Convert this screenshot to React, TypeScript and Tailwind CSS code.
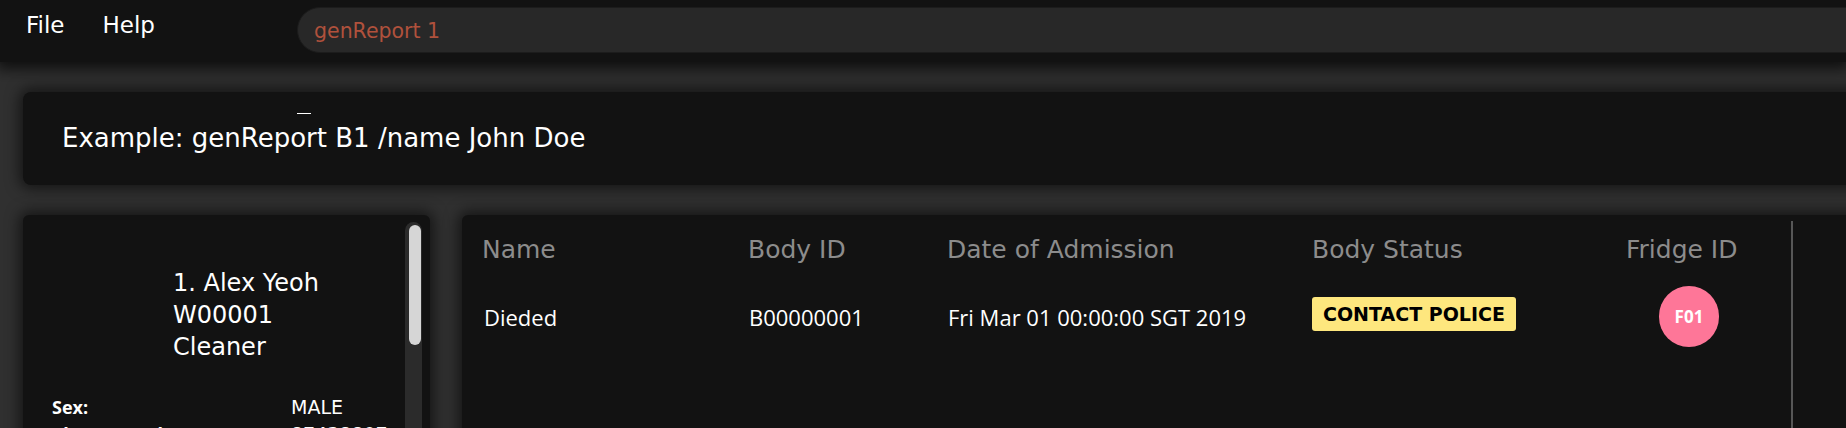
const gothic = "font-['DejaVu_Sans',sans-serif]";
const segoe = "font-['Open_Sans',sans-serif]";

function MenuBar() {
  return (
    <div className="relative z-20 flex h-[62px] shrink-0 bg-[#121212] shadow-[0_3px_14px_4px_rgba(0,0,0,0.7)]">
      <div className={`flex w-[297px] shrink-0 gap-[38px] pl-[26px] pt-[12px] text-[23px] leading-[27px] text-white ${gothic}`}>
        <span>File</span>
        <span>Help</span>
      </div>
      <div className="mr-[-40px] mt-[7px] h-[46px] flex-1 rounded-full border border-[#1c1c1c] bg-[#282828] pl-[16px] pt-[11px]">
        <span className={`block text-[20.5px] leading-[24px] text-[#b0513c] ${gothic}`}>genReport 1</span>
      </div>
    </div>
  );
}

function ResultBox() {
  return (
    <div className="ml-[23px] mr-[-40px] mt-[30px] h-[93px] shrink-0 rounded-lg bg-[#121212] pl-[39px] pt-[21px] shadow-[0_0_14px_4px_rgba(0,0,0,0.55)]">
      <div className="ml-[235px] h-[1px] w-[14px] bg-white" />
      <p className={`mt-[9px] text-[26px] leading-[30px] text-white ${gothic}`}>Example: genReport B1 /name John Doe</p>
    </div>
  );
}

function WorkerCard() {
  return (
    <div className="flex h-full w-[407px] shrink-0 rounded-md bg-[#121212] shadow-[0_0_14px_4px_rgba(0,0,0,0.55)]">
      <div className="flex-1 pt-[52px]">
        <div className={`pl-[150px] text-[24px] leading-[32px] text-white ${gothic}`}>
          <div>1. Alex Yeoh</div>
          <div>W00001</div>
          <div>Cleaner</div>
        </div>
        <div className="mt-[32px] grid grid-cols-[268px_1fr] gap-y-[3px] leading-[24px] text-white">
          <span className={`pl-[29px] text-[18px] font-bold ${segoe}`}>Sex:</span>
          <span className={`text-[19px] ${gothic}`}>MALE</span>
          <span className={`pl-[29px] text-[18px] font-bold ${segoe}`}>Phone Number:</span>
          <span className={`text-[19px] ${gothic}`}>87438807</span>
        </div>
      </div>
      <div className="mr-[8px] mt-[7px] w-[17px] rounded-t-full bg-[#2b2b2b] px-[4px] pt-[3px]">
        <div className="h-[120px] w-[12px] rounded-full bg-[#d6d6d6]" />
      </div>
    </div>
  );
}

function BodyTable() {
  const headers = ["Name", "Body ID", "Date of Admission", "Body Status", "Fridge ID"];
  const cols = "grid grid-cols-[266px_199px_365px_314px_150px]";
  return (
    <div className="ml-[32px] mr-[-40px] flex h-full flex-1 rounded-md bg-[#121212] shadow-[0_0_14px_4px_rgba(0,0,0,0.55)]">
      <div className="w-[1329px] shrink-0 pl-[20px] pt-[20px]">
        <div className={`${cols} text-[25px] leading-[30px] text-[#8c8c8c] ${gothic}`}>
          {headers.map((h) => (
            <span key={h}>{h}</span>
          ))}
        </div>
        <div className={`${cols} mt-[21px] h-[61px] items-center text-white`}>
          <span className={`pl-[2px] text-[22px] leading-[30px] ${segoe}`}>Dieded</span>
          <span className={`pl-[1px] text-[22px] leading-[30px] ${segoe}`}>B00000001</span>
          <span className={`pl-[1px] text-[22px] leading-[30px] ${segoe}`}>Fri Mar 01 00:00:00 SGT 2019</span>
          <div className="-mt-[5px] flex">
            <span className={`rounded-[3px] bg-[#fee77e] px-[11px] py-[6px] text-[19px] font-bold leading-[22px] text-black ${gothic}`}>
              CONTACT POLICE
            </span>
          </div>
          <div className="flex pl-[33px]">
            <div className={`flex h-[61px] w-[60px] items-center justify-center rounded-full bg-[#fe7698] text-[17px] font-bold leading-[24px] text-white ${segoe}`}>
              F01
            </div>
          </div>
        </div>
      </div>
      <div className="mt-[6px] w-[2px] bg-[#575757]" />
    </div>
  );
}

export default function App() {
  return (
    <div className="flex h-[428px] w-[1846px] flex-col overflow-hidden bg-[#303030]">
      <MenuBar />
      <ResultBox />
      <div className="mt-[30px] flex flex-1 pl-[23px]">
        <WorkerCard />
        <BodyTable />
      </div>
    </div>
  );
}
